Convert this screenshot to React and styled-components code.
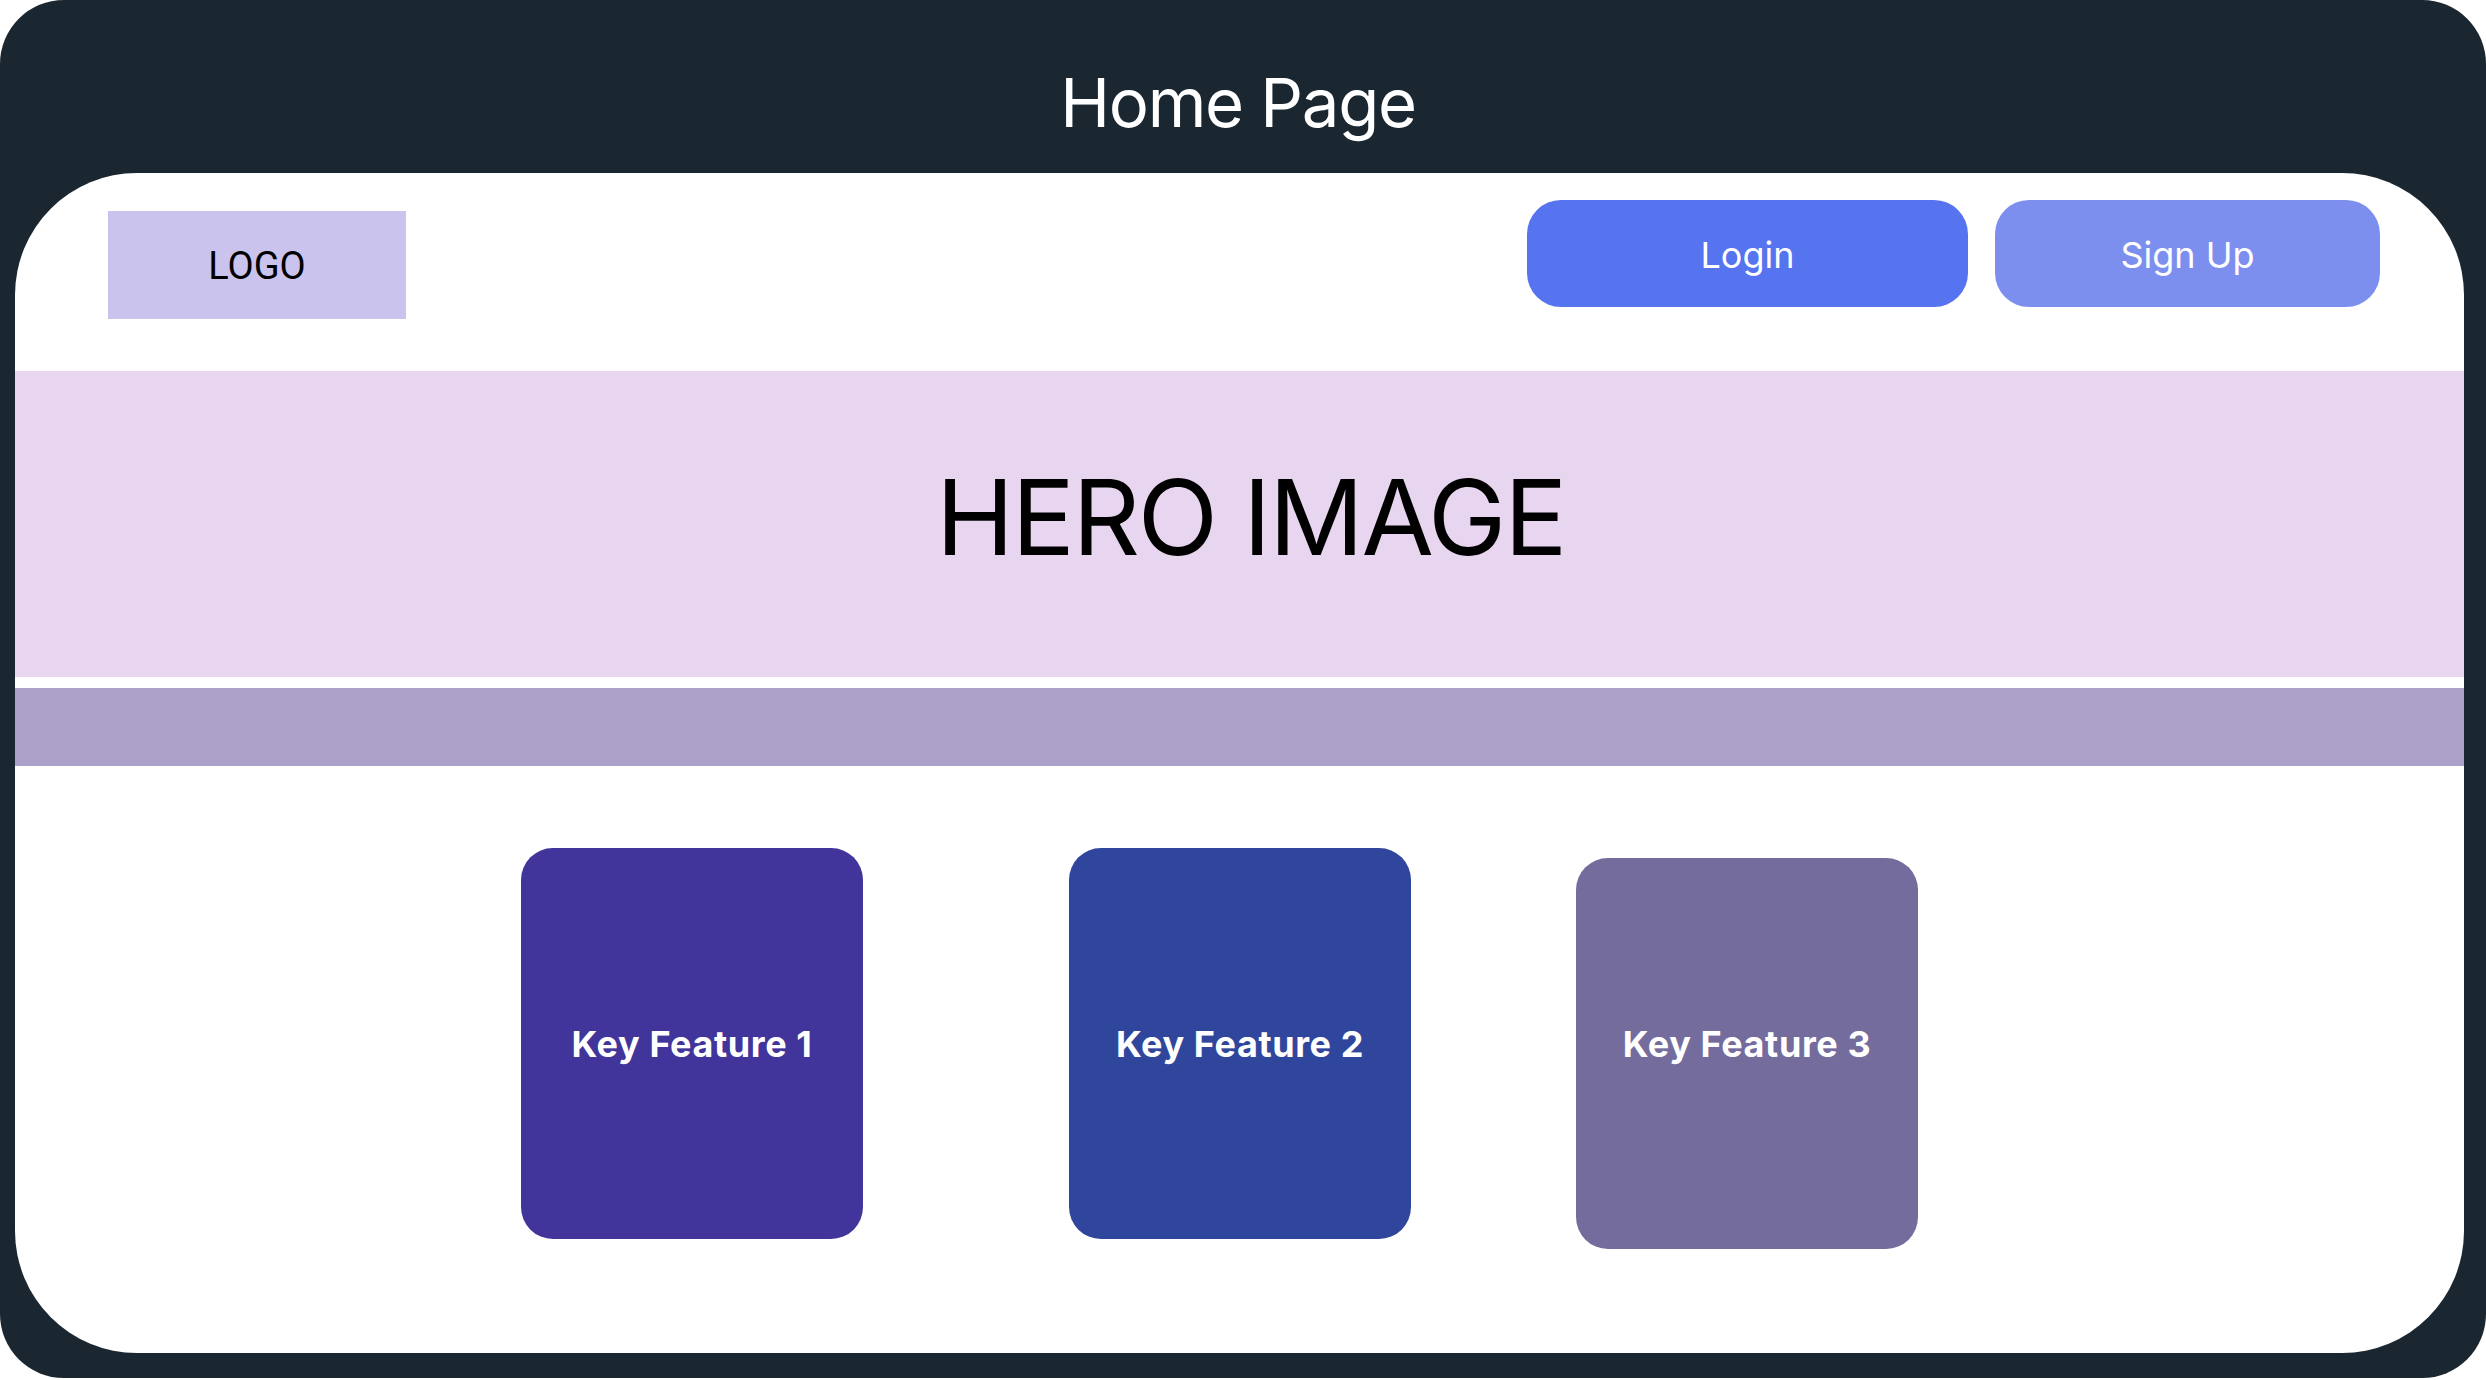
import React from 'react'
import styled, { createGlobalStyle } from 'styled-components'

const GlobalStyle = createGlobalStyle`
  html, body {
    margin: 0;
    padding: 0;
    background: #fff;
  }
  * { box-sizing: border-box; }
`

const Frame = styled.div`
  width: 2486px;
  height: 1378px;
  background: #1a2630;
  border-radius: 64px;
  display: flex;
  flex-direction: column;
  overflow: hidden;
  font-family: Inter, 'Liberation Sans', sans-serif;
`

const TitleBar = styled.div`
  height: 173px;
  flex-shrink: 0;
  display: flex;
  justify-content: center;
  align-items: flex-start;
  padding-top: 62px;
  padding-right: 10px;
  color: #fff;
  font-size: 67px;
  line-height: 1.21;
  letter-spacing: -1.3px;
`

const Panel = styled.div`
  flex: 1;
  margin: 0 22px 25px 15px;
  background: #fff;
  border-radius: 122px;
  overflow: hidden;
  display: flex;
  flex-direction: column;
`

const Header = styled.header`
  height: 198px;
  flex-shrink: 0;
  display: flex;
  justify-content: space-between;
  align-items: flex-start;
  padding: 27px 84px 0 93px;
`

const Logo = styled.div`
  margin-top: 11px;
  width: 298px;
  height: 108px;
  background: #c9c3ee;
  display: flex;
  align-items: center;
  justify-content: center;
  font-family: Roboto, 'Liberation Sans', sans-serif;
  font-size: 38px;
  color: #000;
  padding-top: 2px;
`

const AuthGroup = styled.div`
  display: flex;
  gap: 27px;
`

const AuthButton = styled.button`
  width: ${p => p.$width}px;
  height: 107px;
  border: none;
  border-radius: 34px;
  background: ${p => p.$bg};
  color: #fff;
  font-family: Inter, 'Liberation Sans', sans-serif;
  font-size: 36px;
  display: flex;
  align-items: center;
  justify-content: center;
  padding: 2px 0 0;
  cursor: pointer;
`

const Hero = styled.section`
  height: 306px;
  flex-shrink: 0;
  background: #e8d5ef;
  display: flex;
  align-items: center;
  justify-content: center;
  padding: 0 0 16px 22px;
  font-size: 105px;
  color: #000;
  letter-spacing: -2.3px;
`

const FeatureBar = styled.div`
  margin-top: 11px;
  height: 78px;
  flex-shrink: 0;
  background: #aba1c8;
`

const CardRow = styled.div`
  display: flex;
  align-items: flex-start;
  padding: 82px 0 0 506px;
`

const Card = styled.div`
  width: 342px;
  height: 391px;
  margin-top: ${p => p.$drop}px;
  margin-left: ${p => p.$gap}px;
  padding-bottom: ${p => p.$drop * 2}px;
  border-radius: 32px;
  background: ${p => p.$bg};
  color: #fff;
  display: flex;
  align-items: center;
  justify-content: center;
  font-size: 36px;
  font-weight: 700;
  letter-spacing: 0.6px;
`

const features = [
  { label: 'Key Feature 1', bg: '#41359b', gap: 0, drop: 0 },
  { label: 'Key Feature 2', bg: '#2f469c', gap: 206, drop: 0 },
  { label: 'Key Feature 3', bg: '#736c9c', gap: 165, drop: 10 }
]

const App = () =>
  <>
    <GlobalStyle />
    <Frame>
      <TitleBar>Home Page</TitleBar>
      <Panel>
        <Header>
          <Logo>LOGO</Logo>
          <AuthGroup>
            <AuthButton $width={441} $bg='#5673f0'>Login</AuthButton>
            <AuthButton $width={385} $bg='#7d8fee'>Sign Up</AuthButton>
          </AuthGroup>
        </Header>
        <Hero>HERO IMAGE</Hero>
        <FeatureBar />
        <CardRow>
          {features.map(f =>
            <Card key={f.label} $bg={f.bg} $gap={f.gap} $drop={f.drop}>{f.label}</Card>
          )}
        </CardRow>
      </Panel>
    </Frame>
  </>

export default App
